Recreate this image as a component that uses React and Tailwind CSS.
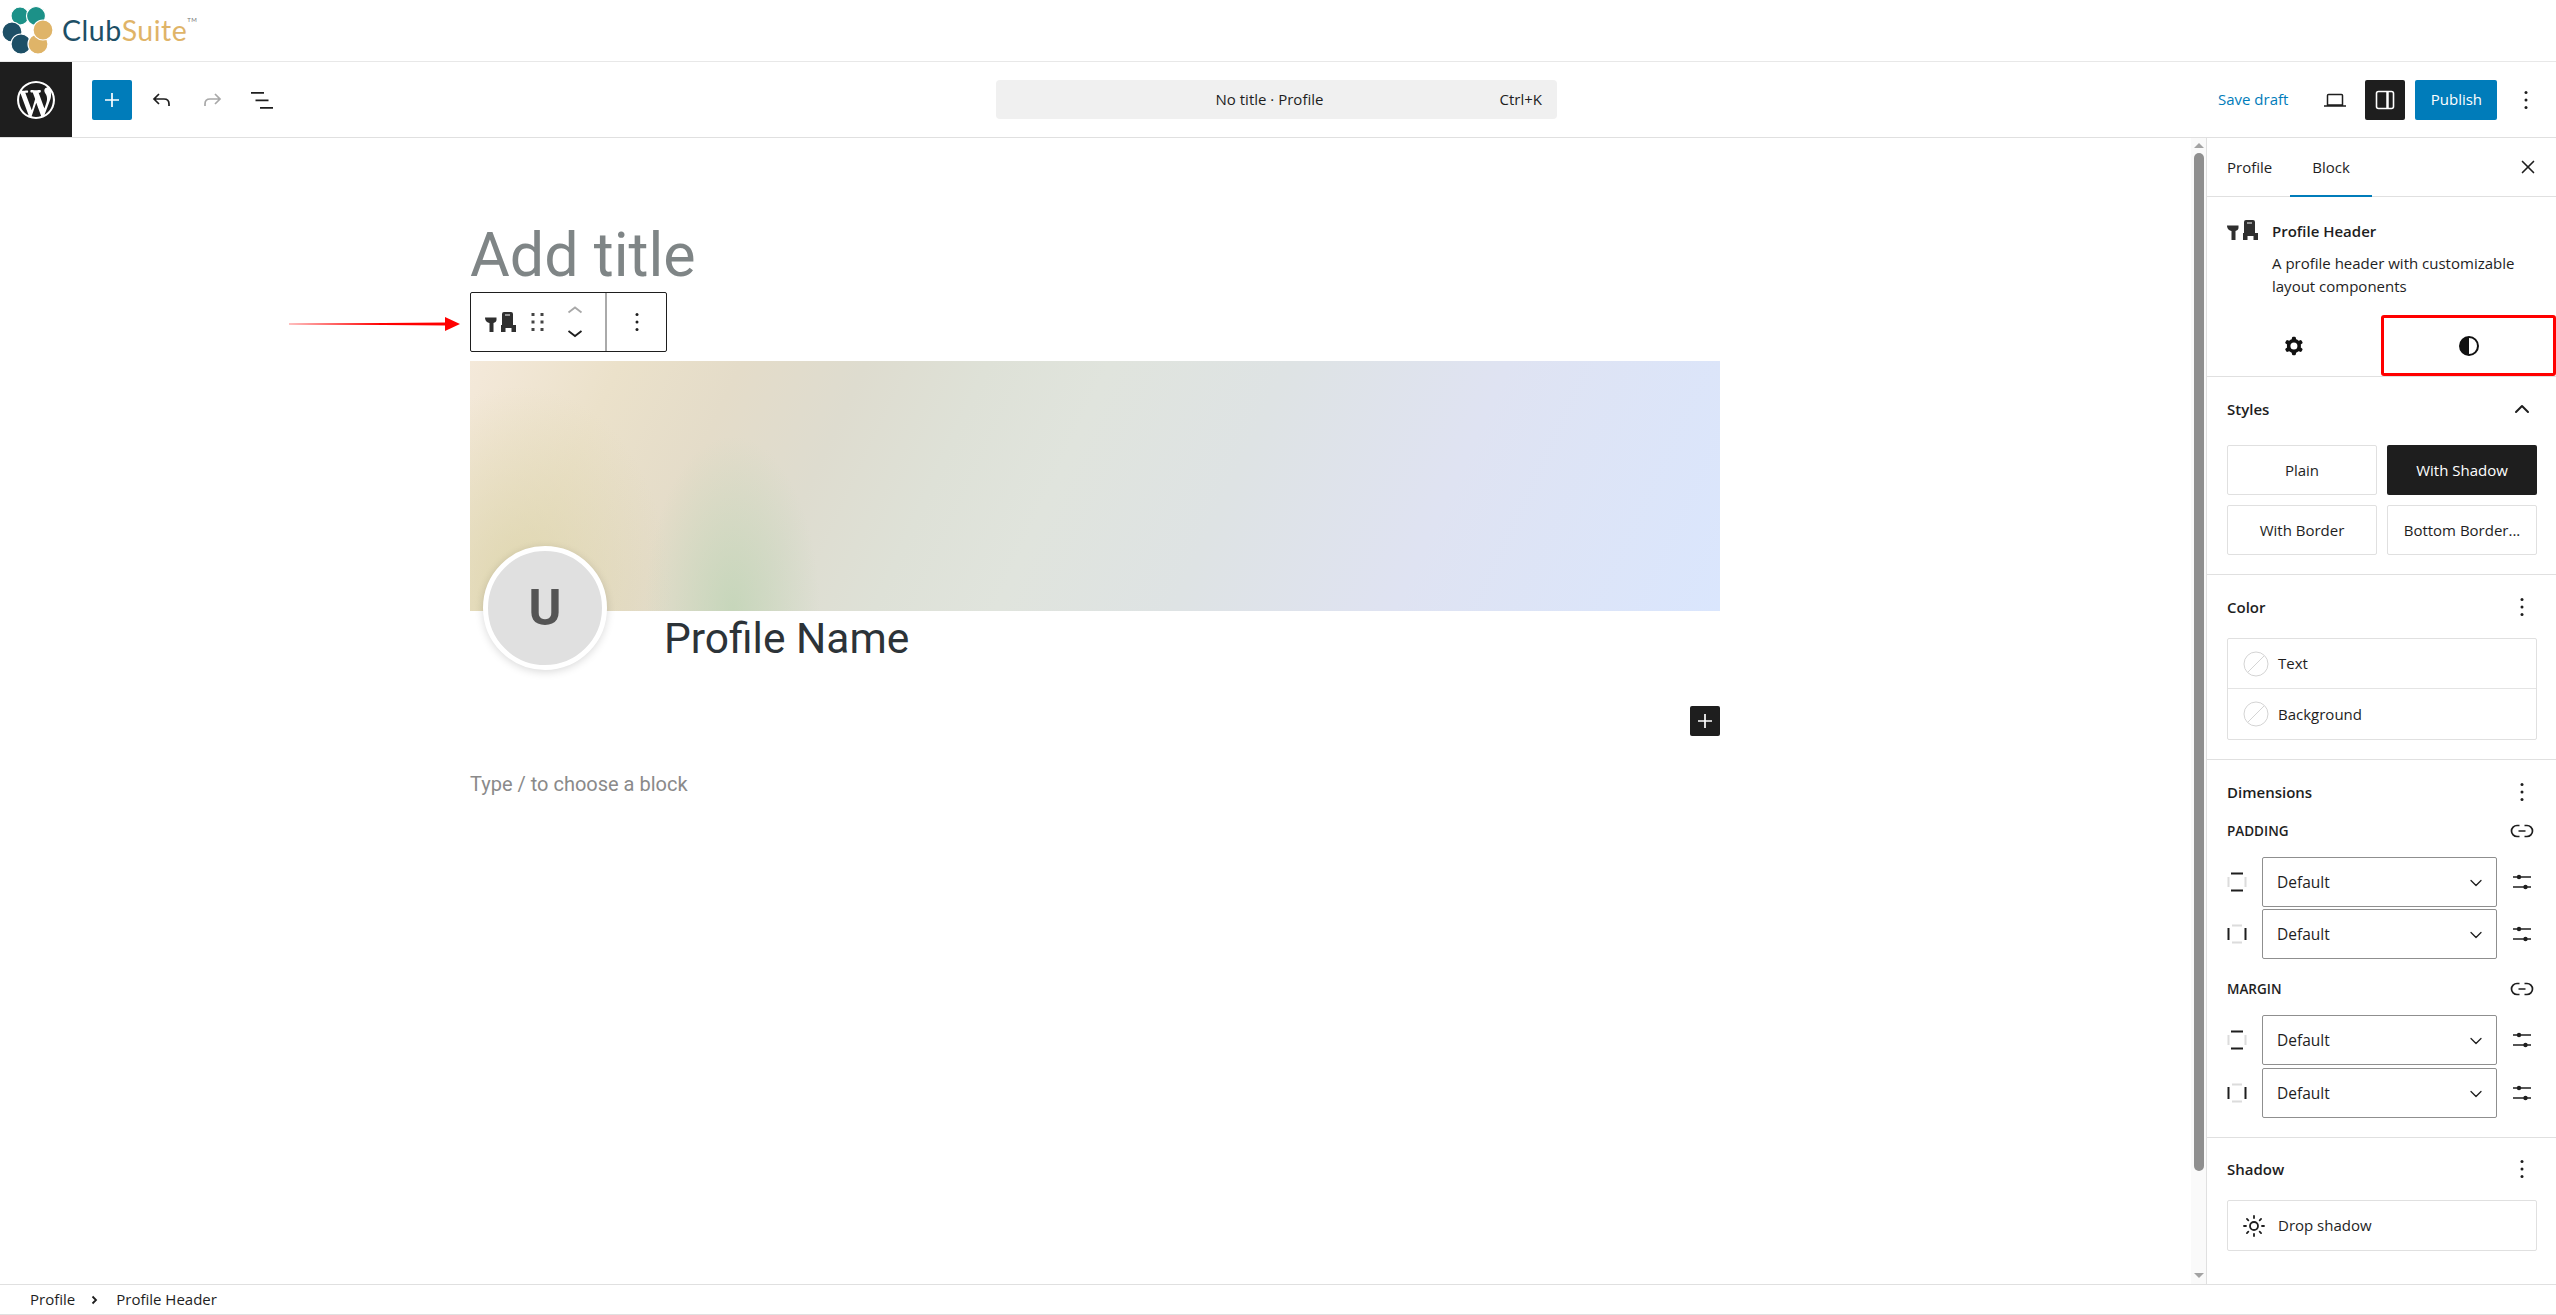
import React from 'react';
import { ChevronUp, ChevronDown, X, Sun } from 'lucide-react';

const ui = "font-['Open_Sans','Noto_Sans',sans-serif]";

const Dots = ({ className = '' }) => (
  <svg width="24" height="24" viewBox="0 0 24 24" className={className} fill="#1e1e1e">
    <circle cx="12" cy="4.500" r="1.500" />
    <circle cx="12" cy="12" r="1.500" />
    <circle cx="12" cy="19.500" r="1.500" />
  </svg>
);

const Logo = () => (
  <svg width="60" height="60" viewBox="0 0 60 60" stroke="#fff" strokeWidth="1.200">
    <circle cx="20" cy="15" r="9" fill="#1c9188" />
    <circle cx="36" cy="15" r="9.500" fill="#1c9188" />
    <circle cx="12" cy="31" r="10" fill="#1d4f66" />
    <circle cx="21" cy="43" r="10" fill="#1d4f66" />
    <circle cx="38" cy="43" r="10" fill="#dfb468" />
    <circle cx="43" cy="29" r="10" fill="#dfb468" />
    <circle cx="28" cy="29" r="4.500" fill="#fff" stroke="none" />
  </svg>
);

const WpLogo = () => (
  <svg width="38" height="38" viewBox="0 0 20 20" fill="#fff">
    <path d="M20 10c0-5.510-4.490-10-10-10C4.480 0 0 4.490 0 10c0 5.520 4.480 10 10 10 5.510 0 10-4.480 10-10zM7.780 15.370L4.370 6.220c.55-.02 1.170-.08 1.170-.08.50-.06.44-1.130-.06-1.110 0 0-1.450.11-2.370.11-.18 0-.37 0-.58-.01C4.120 2.690 6.890 1.050 10 1.050c2.320 0 4.430.88 6.020 2.340-.68-.11-1.650.39-1.650 1.580 0 .74.450 1.360.90 2.100.35.610.55 1.360.55 2.460 0 1.490-1.400 5-1.400 5l-3.030-8.370c.54-.02.82-.17.82-.17.50-.05.44-1.250-.06-1.220 0 0-1.440.12-2.380.12-.87 0-2.330-.12-2.330-.12-.50-.03-.56 1.200-.06 1.220l.92.08 1.260 3.410zM17.410 10c.24-.64.740-1.870.43-4.250.70 1.290 1.050 2.710 1.050 4.250 0 3.290-1.730 6.240-4.400 7.780.97-2.590 1.940-5.200 2.920-7.780zM6.100 18.090C3.120 16.650 1.110 13.530 1.110 10c0-1.300.23-2.480.72-3.590C3.250 10.300 4.670 14.200 6.100 18.090zm4.030-6.630l2.580 6.980c-.86.300-1.760.460-2.710.460-.79 0-1.570-.11-2.290-.33.810-2.390 1.610-4.750 2.420-7.110z" />
  </svg>
);

const BlockIcon = ({ className = '' }) => (
  <svg width="31" height="20" viewBox="0 0 31 20" className={`shrink-0 ${className}`} fill="#2f2f2f">
    <path d="M0 5.500h11.500V8c0 1.500-1.500 2.500-3 3v9H4.500v-9C2.500 10.500 0 9 0 5.500z" />
    <path fillRule="evenodd" d="M19 0h7a2 2 0 0 1 2 2v11h3v7h-4.500v-4h-6v4H16v-7h1V2a2 2 0 0 1 2-2zm1 2.500v1h5v-1z" />
  </svg>
);

const Cog = () => (
  <svg width="28" height="28" viewBox="0 0 24 24" fill="#111">
    <path fillRule="evenodd" d="M10.289 4.836A1 1 0 0 1 11.275 4h1.306a1 1 0 0 1 .987.836l.244 1.466c.787.26 1.503.679 2.108 1.218l1.393-.522a1 1 0 0 1 1.216.437l.653 1.13a1 1 0 0 1-.23 1.273l-1.148.944a6.025 6.025 0 0 1 0 2.435l1.149.946a1 1 0 0 1 .23 1.272l-.653 1.13a1 1 0 0 1-1.216.437l-1.394-.522c-.605.54-1.32.958-2.108 1.218l-.244 1.466a1 1 0 0 1-.987.836h-1.306a1 1 0 0 1-.986-.836l-.244-1.466a5.995 5.995 0 0 1-2.108-1.218l-1.394.522a1 1 0 0 1-1.217-.436l-.653-1.131a1 1 0 0 1 .23-1.272l1.149-.946a6.026 6.026 0 0 1 0-2.435l-1.148-.944a1 1 0 0 1-.23-1.272l.653-1.131a1 1 0 0 1 1.217-.437l1.393.522a5.994 5.994 0 0 1 2.108-1.218l.244-1.466zM14.929 12a3 3 0 1 1-6 0 3 3 0 0 1 6 0z" />
  </svg>
);

const LinkIcon = () => (
  <svg width="24" height="24" viewBox="0 0 24 24" className="mr-[3px]" fill="none" stroke="#1e1e1e" strokeWidth="1.700">
    <path d="M9.500 6.500H7a5.500 5.500 0 0 0 0 11h2.500M14.500 6.500H17a5.500 5.500 0 0 1 0 11h-2.500M8.500 12h7" />
  </svg>
);

const Sliders = () => (
  <svg width="24" height="24" viewBox="0 0 24 24" className="ml-[13px]" fill="#1e1e1e" stroke="#1e1e1e" strokeWidth="1.500">
    <path d="M3 7h18M3 17h18" />
    <circle cx="9" cy="7" r="2.200" stroke="none" />
    <circle cx="15.500" cy="17" r="2.200" stroke="none" />
  </svg>
);

const SectionHead = ({ title, open }) => (
  <div className="flex items-center justify-between h-[24px]">
    <h2 className={`text-[15px] font-semibold text-[#1e1e1e] ${ui}`}>{title}</h2>
    {open ? <ChevronUp size={24} strokeWidth={2} className="text-[#1e1e1e] mr-[3px]" /> : <Dots className="mr-[3px]" />}
  </div>
);

const ColorRow = ({ label, last }) => (
  <div className={`flex items-center gap-[9px] h-[50px] px-[15px] ${last ? '' : 'border-b border-[#e4e4e4]'}`}>
    <svg width="26" height="26" viewBox="0 0 26 26">
      <circle cx="13" cy="13" r="12" fill="none" stroke="#d4d4d4" />
      <path d="M5 21L21 5" stroke="#d4d4d4" />
    </svg>
    <span className={`text-[15px] text-[#1e1e1e] ${ui}`}>{label}</span>
  </div>
);

const SideIcon = ({ axis }) => (
  <svg width="20" height="20" viewBox="0 0 20 20" className="shrink-0" fill="none" strokeWidth="2">
    <path d={axis === 'v' ? 'M1.500 5v10M18.500 5v10' : 'M5 1.500h10M5 18.500h10'} stroke="#dcdcdc" />
    <path d={axis === 'v' ? 'M4 1.500h12M4 18.500h12' : 'M1.500 4v12M18.500 4v12'} stroke="#1e1e1e" />
  </svg>
);

const SizeRow = ({ axis }) => (
  <div className="flex items-center h-[50px]">
    <div className="w-[35px]"><SideIcon axis={axis} /></div>
    <div className="w-[235px] h-[50px] flex items-center justify-between pl-[14px] pr-[10px] pt-[1px] border border-[#8f8f8f] rounded-[2px]">
      <span className={`text-[15.500px] text-[#1e1e1e] ${ui}`}>Default</span>
      <ChevronDown size={20} strokeWidth={1.500} className="text-[#1e1e1e]" />
    </div>
    <Sliders />
  </div>
);

const StyleBtn = ({ children, active }) => (
  <div className={`h-[50px] flex items-center justify-center rounded-[2px] text-[15px] ${ui} ${active ? 'bg-[#1e1e1e] text-white' : 'border border-[#e0e0e0] text-[#1e1e1e]'}`}>
    {children}
  </div>
);

const Section = ({ children, className = '' }) => (
  <section className={`pl-[20px] pr-[19px] border-b border-[#e0e0e0] ${className}`}>{children}</section>
);

const Sidebar = () => (
  <aside className="w-[350px] shrink-0 border-l border-[#e0e0e0] overflow-hidden">
    <div className={`flex items-center h-[59px] pl-[20px] pr-[17px] border-b border-[#e0e0e0] text-[15px] text-[#1e1e1e] ${ui}`}>
      <span>Profile</span>
      <span className="relative ml-[40px] h-full flex items-center">
        Block
        <span className="absolute bottom-[-1px] left-[-22px] right-[-22px] h-[2px] bg-[#007cba]" />
      </span>
      <X size={22} strokeWidth={1.800} className="ml-auto" />
    </div>

    <div className="flex pl-[20px] pt-[23px] h-[118px]">
      <BlockIcon />
      <div className={`ml-[14px] text-[15px] text-[#1e1e1e] leading-[23px] ${ui}`}>
        <div className="font-semibold mb-[9px]">Profile Header</div>
        <div className="w-[270px]">A profile header with customizable layout components</div>
      </div>
    </div>
    <div className="flex h-[62px] border-b border-[#e0e0e0]">
      <div className="w-[174px] flex items-center justify-center">
        <Cog />
      </div>
      <div className="flex-1 flex items-center justify-center border-[3px] border-[#f00] rounded-[3px]">
        <svg width="22" height="22" viewBox="0 0 22 22">
          <circle cx="11" cy="11" r="9" fill="none" stroke="#111" strokeWidth="2" />
          <path d="M11 2a9 9 0 0 0 0 18z" fill="#111" />
        </svg>
      </div>
    </div>

    <Section className="pt-[20px] h-[198px]">
      <SectionHead title="Styles" open />
      <div className="grid grid-cols-2 gap-[10px] mt-[24px]">
        <StyleBtn>Plain</StyleBtn>
        <StyleBtn active>With Shadow</StyleBtn>
        <StyleBtn>With Border</StyleBtn>
        <StyleBtn>Bottom Border...</StyleBtn>
      </div>
    </Section>

    <Section className="pt-[20px] h-[185px]">
      <SectionHead title="Color" />
      <div className="mt-[19px] border border-[#e0e0e0] rounded-[2px]">
        <ColorRow label="Text" />
        <ColorRow label="Background" last />
      </div>
    </Section>

    <Section className="pt-[20px] h-[378px]">
      <SectionHead title="Dimensions" />
      <div className={`mt-[15px] flex items-center justify-between text-[13.500px] font-semibold text-[#1e1e1e] ${ui}`}>
        PADDING
        <LinkIcon />
      </div>
      <div className="mt-[14px] flex flex-col gap-[2px]">
        <SizeRow axis="v" />
        <SizeRow axis="h" />
      </div>
      <div className={`mt-[18px] flex items-center justify-between text-[13.500px] font-semibold text-[#1e1e1e] ${ui}`}>
        MARGIN
        <LinkIcon />
      </div>
      <div className="mt-[14px] flex flex-col gap-[3px]">
        <SizeRow axis="v" />
        <SizeRow axis="h" />
      </div>
    </Section>

    <div className="pl-[20px] pr-[19px] pt-[19px]">
      <SectionHead title="Shadow" />
      <div className="mt-[19px] h-[51px] flex items-center gap-[12px] px-[14px] border border-[#e0e0e0] rounded-[2px]">
        <Sun size={24} strokeWidth={1.800} className="text-[#1e1e1e]" />
        <span className={`text-[15px] text-[#1e1e1e] ${ui}`}>Drop shadow</span>
      </div>
    </div>
  </aside>
);

const Scrollbar = () => (
  <div className="w-[15px] shrink-0 flex flex-col items-center bg-[#fafafa]">
    <div className="mt-[5px] w-0 h-0 border-x-[5px] border-x-transparent border-b-[5px] border-b-[#a3a3a3]" />
    <div className="mt-[5px] w-[10px] h-[1018px] bg-[#8f8f8f] rounded-[5px]" />
    <div className="mt-auto mb-[6px] w-0 h-0 border-x-[5px] border-x-transparent border-t-[5px] border-t-[#a3a3a3]" />
  </div>
);

const Banner = () => (
  <div className="h-[250px] bg-[radial-gradient(ellipse_7%_70%_at_21%_100%,rgba(190,212,180,0.75)_0%,rgba(205,218,195,0)_100%),radial-gradient(ellipse_12%_80%_at_4%_90%,rgba(220,212,170,0.8)_0%,rgba(225,215,180,0)_100%),linear-gradient(115deg,#f4e9da_0%,#ebe1ca_11%,#e4dcc9_20%,#dedccf_29%,#dee1d7_38%,#e0e4dd_47%,#dee3e4_60%,#dfe3f2_76%,#dae6fd_100%)]" />
);

const Canvas = () => (
  <main className="flex-1 min-w-0 relative font-['Roboto',sans-serif] pt-[80px] pl-[470px]">
    <svg width="172" height="18" viewBox="0 0 172 18" className="absolute left-[289px] top-[177px]">
      <path d="M0 8.800L157 7.600V10.400L0 9.200z" fill="#f00" />
      <path d="M156 2L171 9L156 16z" fill="#f00" />
    </svg>

    <div className="w-[1250px]">
      <h1 className="text-[61px] leading-[74px] text-[#7f8586] h-[74px]">Add title</h1>

      <div className="flex items-center w-[197px] h-[60px] border border-[#1e1e1e] rounded-[2px] bg-white">
        <BlockIcon className="ml-[14px]" />
        <svg width="16" height="24" viewBox="0 0 16 24" className="ml-[14px]" fill="#444">
          <rect x="1.500" y="3" width="3" height="3" /><rect x="10.500" y="3" width="3" height="3" />
          <rect x="1.500" y="10.500" width="3" height="3" /><rect x="10.500" y="10.500" width="3" height="3" />
          <rect x="1.500" y="18" width="3" height="3" /><rect x="10.500" y="18" width="3" height="3" />
        </svg>
        <svg width="16" height="32" viewBox="0 0 16 32" className="ml-[21px]" fill="none" strokeWidth="1.800">
          <path d="M1.500 6.500L8 1.500l6.500 5" stroke="#a8a8a8" />
          <path d="M1.500 25l6.500 5 6.500-5" stroke="#1e1e1e" />
        </svg>
        <div className="ml-[22px] h-full w-[2px] bg-[#aaa]" />
        <Dots className="ml-[18px]" />
      </div>

      <div className="mt-[9px]">
        <Banner />
      </div>

      <div className="relative h-[95px]">
        <div className="absolute left-[13px] top-[-65px] w-[124px] h-[124px] rounded-full bg-[#e0e0e0] border-[5px] border-white shadow-[0_2px_8px_rgba(0,0,0,0.15)] flex items-center justify-center text-[50px] font-bold text-[#555]">
          U
        </div>
        <div className="pl-[194px] pt-[3px] text-[42.500px] leading-[50px] text-[#2c3338]">Profile Name</div>
      </div>

      <div className="flex justify-end">
        <div className="w-[30px] h-[30px] bg-[#1e1e1e] rounded-[2px] flex items-center justify-center">
          <svg width="20" height="20" viewBox="0 0 20 20"><path d="M10 3v14M3 10h14" stroke="#fff" strokeWidth="1.700" /></svg>
        </div>
      </div>

      <p className="mt-[35px] text-[20px] leading-[26px] text-[#8a8a8a]">Type / to choose a block</p>
    </div>
  </main>
);

export default function App() {
  return (
    <div className={`w-[2556px] h-[1315px] flex flex-col bg-white overflow-hidden ${ui}`}>
      <div className="h-[62px] shrink-0 flex items-center border-b border-[#e8e8e8]">
        <Logo />
        <div className="ml-[2px] flex items-start text-[28.500px] font-['Lato',sans-serif] tracking-[0.5px] leading-none">
          <span className="text-[#1d4f66]">Club</span>
          <span className="text-[#dfb468]">Suite</span>
          <span className="text-[6px] text-[#777] mt-[1px]">TM</span>
        </div>
      </div>

      <header className="h-[76px] shrink-0 flex items-center border-b border-[#e0e0e0]">
        <div className="w-[72px] h-full bg-[#1e1e1e] flex items-center justify-center">
          <WpLogo />
        </div>
        <div className="ml-[20px] w-[40px] h-[40px] bg-[#007cba] rounded-[2px] flex items-center justify-center">
          <svg width="24" height="24" viewBox="0 0 24 24"><path d="M12 5v14M5 12h14" stroke="#fff" strokeWidth="1.700" /></svg>
        </div>
        <svg width="24" height="24" viewBox="0 0 24 24" className="ml-[18px]" fill="none" stroke="#1e1e1e" strokeWidth="1.700">
          <path d="M9 6L4 11l5 5M4 11h10c3 0 5 1.500 5 5v2" />
        </svg>
        <svg width="24" height="24" viewBox="0 0 24 24" className="ml-[26px]" fill="none" stroke="#a8a8a8" strokeWidth="1.700">
          <path d="M15 6l5 5-5 5M20 11H10c-3 0-5 1.500-5 5v2" />
        </svg>
        <svg width="24" height="24" viewBox="0 0 24 24" className="ml-[26px]" fill="#1e1e1e">
          <path d="M1 4h13v1.700H1zM5.500 11.500h13v1.700h-13zM10 19h13v1.700H10z" />
        </svg>

        <div className="ml-[722px] w-[561px] h-[39px] rounded-[4px] bg-[#f0f0f0] flex items-center relative text-[15px] text-[#1e1e1e]">
          <span className="absolute inset-x-0 pr-[14px] text-center">No title · Profile</span>
          <span className="absolute right-[15px]">Ctrl+K</span>
        </div>

        <span className="ml-[661px] text-[15px] text-[#007cba]">Save draft</span>
        <svg width="24" height="24" viewBox="0 0 24 24" className="ml-[35px]" fill="none" stroke="#1e1e1e" strokeWidth="1.500">
          <path d="M5.500 6.500h13a1 1 0 0 1 1 1V17h-15V7.500a1 1 0 0 1 1-1zM1 18h22" />
        </svg>
        <div className="ml-[18px] w-[40px] h-[40px] bg-[#1e1e1e] rounded-[2px] flex items-center justify-center">
          <svg width="24" height="24" viewBox="0 0 24 24" fill="none" stroke="#fff" strokeWidth="1.600">
            <rect x="3.500" y="3.500" width="17" height="17" rx="2" />
            <path d="M14.500 3.500v17" strokeWidth="2.500" />
          </svg>
        </div>
        <div className="ml-[10px] w-[82px] h-[40px] bg-[#007cba] rounded-[2px] flex items-center justify-center text-[15px] text-white">
          Publish
        </div>
        <Dots className="ml-[17px]" />
      </header>

      <div className="flex-1 flex min-h-0">
        <Canvas />
        <Scrollbar />
        <Sidebar />
      </div>

      <footer className="h-[31px] shrink-0 flex items-center pl-[30px] border-t border-b border-[#e0e0e0] text-[15px] text-[#1e1e1e]">
        <span>Profile</span>
        <svg width="10" height="12" viewBox="0 0 10 12" className="ml-[15px]" fill="none" stroke="#1e1e1e" strokeWidth="1.800">
          <path d="M2.500 2.500L6 6l-3.500 3.500" />
        </svg>
        <span className="ml-[16px]">Profile Header</span>
      </footer>
    </div>
  );
}
